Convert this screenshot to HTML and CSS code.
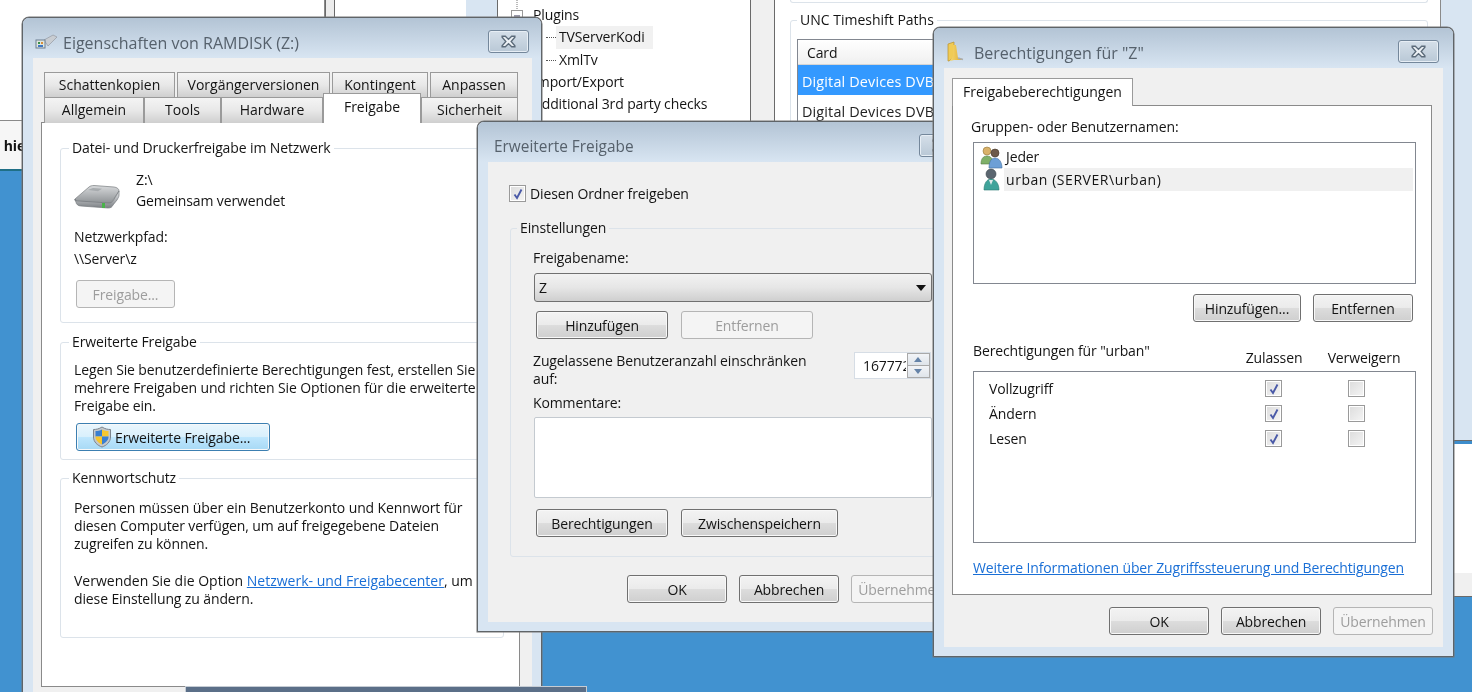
FILE: index.html
```html
<!DOCTYPE html>
<html lang="de">
<head>
<meta charset="utf-8">
<title>Freigabe</title>
<link rel="stylesheet" href="styles.css">
</head>
<body>
<svg class="defs" width="0" height="0" aria-hidden="true">
  <symbol id="ico-x" viewBox="0 0 16 12"><path d="M2 1h3l3 3 3-3h3v1l-3.500 4 3.500 4v1h-3l-3-3-3 3H2v-1l3.500-4L2 2z" fill="#eef2f6" stroke="#5c6b7a" stroke-width="1.300"/></symbol>
  <symbol id="ico-check" viewBox="0 0 12 12"><path d="M2.500 6.500 5 10 9.500 1.500" fill="none" stroke="#4a5aa8" stroke-width="1.900"/></symbol>
</svg>
<main class="desktop">
  <div class="bg bg-oldwin"></div>
  <div class="bg bg-strip"></div>
  <div class="bg bg-white2"></div>
  <div class="bg bg-frame"></div>
  <div class="bg bg-tree">
    <svg class="tree-lines" width="30" height="30" viewBox="0 0 30 30"><path d="M19 0v10" stroke="#777" stroke-dasharray="1 1"/><rect x="13.500" y="10.500" width="11" height="11" fill="#fff" stroke="#999"/><path d="M16 16h6" stroke="#335"/></svg>
    <p class="node">Plugins</p>
    <p class="node sub hover">TVServerKodi</p>
    <p class="node sub">XmlTv</p>
    <p class="node">Import/Export</p>
    <p class="node">Additional 3rd party checks</p>
  </div>
  <div class="bg bg-gap"></div>
  <div class="bg bg-right">
    <div class="old-group"></div>
    <fieldset class="unc">
      <legend>UNC Timeshift Paths</legend>
      <div class="table">
        <div class="th">Card</div>
        <div class="td sel">Digital Devices DVB-S2 Tuner</div>
        <div class="td">Digital Devices DVB-S2 Tuner</div>
      </div>
    </fieldset>
  </div>
  <div class="bg bg-rframe"></div>
  <div class="bg bg-rlow"><div class="rlow-band"></div><div class="rlow-white"></div><div class="rlow-gray"></div></div>
  <div class="bg bg-lowleft"><b>e hier</b></div>
  <div class="bg bg-taskbar"></div>

  <!-- Eigenschaften -->
  <section class="win win1">
    <header class="titlebar">
      <svg class="ti-drive" width="22" height="15" viewBox="0 0 22 15"><path d="M9 6 18 1l4 2-9 9z" fill="#c9cdd2" stroke="#8b9199" stroke-width=".6"/><rect x="1" y="6" width="9" height="8" fill="#dfe6de" stroke="#6d7f92"/><rect x="3" y="8" width="2" height="2" fill="#3a8f4a"/><rect x="6" y="8" width="2" height="2" fill="#d88f3a"/><rect x="3" y="11" width="5" height="2" fill="#3f77c4"/></svg>
      <h1 class="wtitle">Eigenschaften von RAMDISK (Z:)</h1>
      <span class="close"><svg width="17" height="13"><use href="#ico-x"/></svg></span>
    </header>
    <div class="client c1">
      <div class="tabrow row-top">
        <span class="tab">Schattenkopien</span><span class="tab">Vorgängerversionen</span><span class="tab">Kontingent</span><span class="tab">Anpassen</span>
      </div>
      <div class="tabrow row-bot">
        <span class="tab">Allgemein</span><span class="tab">Tools</span><span class="tab">Hardware</span><span class="tab active">Freigabe</span><span class="tab">Sicherheit</span>
      </div>
      <div class="panel p1">
        <fieldset class="grp g1">
          <legend>Datei- und Druckerfreigabe im Netzwerk</legend>
          <div class="drive-row">
            <svg class="drive" width="46" height="26" viewBox="0 0 46 26">
              <defs><linearGradient id="dt" x1="0" y1="0" x2="0" y2="1"><stop offset="0" stop-color="#d7d9db"/><stop offset="1" stop-color="#8f9396"/></linearGradient><linearGradient id="df" x1="0" y1="0" x2="0" y2="1"><stop offset="0" stop-color="#e8eaec"/><stop offset="1" stop-color="#7c8084"/></linearGradient></defs>
              <path d="M1 15 15 3c1-1 3-1.500 5-1.500l20 1.500c3 .3 5 2 5 4l-8 12-31-1c-3 0-6-1-5-3z" fill="url(#dt)" stroke="#85898c" stroke-width=".8"/>
              <path d="M1 15c0 1 1 2 4 2l30 2c2 0 3-1 4-2l6-10v4c0 2-1 3-2 5l-4 5c-1 2-2 3-5 3l-27-2c-3 0-5-2-5-4z" fill="url(#df)" stroke="#74787c" stroke-width=".7"/>
              <rect x="28" y="19" width="3" height="5" fill="#4ab34a"/>
              <path d="M14 6l5-2 9 .8-4 2.500z" fill="#a7abae"/>
            </svg>
            <div class="drive-text">Z:\<br>Gemeinsam verwendet</div>
          </div>
          <div class="np-label">Netzwerkpfad:</div>
          <div class="np-value">\\Server\z</div>
          <button class="btn off b-freigabe" type="button">Freigabe...</button>
        </fieldset>
        <fieldset class="grp g2">
          <legend>Erweiterte Freigabe</legend>
          <p class="txt">Legen Sie benutzerdefinierte Berechtigungen fest, erstellen Sie<br>mehrere Freigaben und richten Sie Optionen für die erweiterte<br>Freigabe ein.</p>
          <button class="btn hot b-erw" type="button">
            <svg width="20" height="22" viewBox="0 0 20 22"><path d="M10 1c3 2 6 2.500 8.500 2.500V11c0 5-4 8.500-8.500 10C5.500 19.500 1.500 16 1.500 11V3.500C4 3.500 7 3 10 1z" fill="#c4c8cc" stroke="#7d858d"/><path d="M10 3.500v7H3.500V5C6 5 8 4.500 10 3.500z" fill="#3a7fd0"/><path d="M10 3.500c2 1 4 1.500 6.500 1.500v5.500H10z" fill="#f6c62e"/><path d="M3.500 10.500H10v8c-3-1.300-6.500-4-6.500-7.500z" fill="#f6c62e"/><path d="M10 10.500h6.500V11c0 3.500-3.500 6.200-6.500 7.500z" fill="#3a7fd0"/></svg>
            <span>Erweiterte Freigabe...</span>
          </button>
        </fieldset>
        <fieldset class="grp g3">
          <legend>Kennwortschutz</legend>
          <p class="txt tall">Personen müssen über ein Benutzerkonto und Kennwort für<br>diesen Computer verfügen, um auf freigegebene Dateien<br>zugreifen zu können.<br><br><span class="wide">Verwenden Sie die Option <a href="#n">Netzwerk- und Freigabecenter</a>, um</span><br>diese Einstellung zu ändern.</p>
        </fieldset>
      </div>
    </div>
  </section>

  <!-- Erweiterte Freigabe -->
  <section class="win win2">
    <header class="titlebar">
      <h1 class="wtitle t2">Erweiterte Freigabe</h1>
      <span class="close"><svg width="17" height="13"><use href="#ico-x"/></svg></span>
    </header>
    <div class="client c2">
      <label class="cb-row"><span class="cb"><svg width="12" height="12"><use href="#ico-check"/></svg></span><span>Diesen Ordner freigeben</span></label>
      <fieldset class="grp g4">
        <legend>Einstellungen</legend>
        <div class="lbl">Freigabename:</div>
        <div class="combo"><span>Z</span><i class="arrow"></i></div>
        <div class="btnrow r-add">
          <button class="btn b132" type="button">Hinzufügen</button>
          <button class="btn off b132" type="button">Entfernen</button>
        </div>
        <div class="limit">
          <div class="limit-text">Zugelassene Benutzeranzahl einschränken<br>auf:</div>
          <div class="spin"><span class="spin-val">16777216</span><span class="spin-btns"><i class="up"></i><i class="dn"></i></span></div>
        </div>
        <div class="lbl k">Kommentare:</div>
        <div class="memo"></div>
        <div class="btnrow r-perm">
          <button class="btn b132" type="button">Berechtigungen</button>
          <button class="btn b157" type="button">Zwischenspeichern</button>
        </div>
      </fieldset>
      <div class="footer f2">
        <button class="btn b100" type="button">OK</button>
        <button class="btn b100" type="button">Abbrechen</button>
        <button class="btn off b100" type="button">Übernehmen</button>
      </div>
    </div>
  </section>

  <!-- Berechtigungen -->
  <section class="win win3">
    <header class="titlebar">
      <svg class="ti-folder" width="18" height="21" viewBox="0 0 18 21"><defs><linearGradient id="fo" x1="0" y1="0" x2="1" y2="0"><stop offset="0" stop-color="#f7d96e"/><stop offset="1" stop-color="#dca92f"/></linearGradient></defs><path d="M1 3l6-2v15l-5 4H1z" fill="#f0cb55" stroke="#b8912f" stroke-width=".7"/><path d="M6 4h3l2 13 5 1-2 1H7l-4 1 3-5z" fill="url(#fo)"/><path d="M11 17l5 1.500" stroke="#a9aeb4" stroke-width="1.500"/></svg>
      <h1 class="wtitle">Berechtigungen für "Z"</h1>
      <span class="close"><svg width="17" height="13"><use href="#ico-x"/></svg></span>
    </header>
    <div class="client c3">
      <span class="tab active single">Freigabeberechtigungen</span>
      <div class="panel p3">
        <div class="lbl g-names">Gruppen- oder Benutzernamen:</div>
        <ul class="users">
          <li>
            <svg width="24" height="24" viewBox="0 0 24 24"><circle cx="7" cy="6" r="4" fill="#d9b26a" stroke="#94773c" stroke-width=".6"/><path d="M1 19c0-5 2-8 6-8s6 3 6 8z" fill="#7fb069" stroke="#557a45" stroke-width=".6"/><circle cx="15" cy="8" r="4" fill="#6d5a4a" stroke="#443629" stroke-width=".6"/><path d="M9 23c0-6 2-10 6-10s7 4 7 10z" fill="#6d9fd6" stroke="#44719f" stroke-width=".6"/></svg>
            <span class="uname">Jeder</span>
          </li>
          <li class="selrow">
            <svg width="24" height="24" viewBox="0 0 24 24"><circle cx="11" cy="6" r="5" fill="#5b6670" stroke="#3d464e" stroke-width=".6"/><path d="M4 22c0-7 3-11 7-11s8 4 8 11z" fill="#3fa39a" stroke="#2a7a72" stroke-width=".6"/><path d="M9 12l2 5 2-5z" fill="#dfe8e8"/></svg>
            <span class="uname">urban (SERVER\urban)</span>
          </li>
        </ul>
        <div class="btnrow r-users">
          <button class="btn b108" type="button">Hinzufügen...</button>
          <button class="btn b100" type="button">Entfernen</button>
        </div>
        <div class="perm-head">
          <span class="ph-label">Berechtigungen für "urban"</span>
          <span class="ph-allow">Zulassen</span>
          <span class="ph-deny">Verweigern</span>
        </div>
        <div class="perm-list">
          <span>Vollzugriff</span><span class="cb"><svg width="12" height="12"><use href="#ico-check"/></svg></span><span class="cb"></span>
          <span>Ändern</span><span class="cb"><svg width="12" height="12"><use href="#ico-check"/></svg></span><span class="cb"></span>
          <span>Lesen</span><span class="cb"><svg width="12" height="12"><use href="#ico-check"/></svg></span><span class="cb"></span>
        </div>
        <a class="more" href="#m">Weitere Informationen über Zugriffssteuerung und Berechtigungen</a>
      </div>
      <div class="footer f3">
        <button class="btn b100" type="button">OK</button>
        <button class="btn b100" type="button">Abbrechen</button>
        <button class="btn off b100" type="button">Übernehmen</button>
      </div>
    </div>
  </section>
</main>
</body>
</html>
```
FILE: styles.css
```css
* { box-sizing: border-box; }
html, body { margin: 0; height: 100%; overflow: hidden; }
body {
  font-family: "Open Sans", "Noto Sans", sans-serif;
  font-size: 14px;
  letter-spacing: -0.12px;
  color: #141414;
}
.defs { position: absolute; }
.desktop {
  position: relative;
  width: 1472px;
  height: 692px;
  overflow: hidden;
  background: #4192d0;
  filter: blur(0.45px);
}
p { margin: 0; }
a { color: #1a6fd6; text-decoration: underline; }
h1 { margin: 0; font-weight: 400; font-size: inherit; }
fieldset { margin: 0; min-width: 0; }

/* background windows */
.bg { position: absolute; }
.bg-oldwin { left: -4px; top: -4px; width: 329px; height: 125px; background: #fff; border: 1px solid #8a8a8a; border-top: 0; }
.bg-strip { left: 325px; top: 0; width: 10px; height: 125px; background: #ececec; border-left: 1px solid #6a6a6a; border-right: 1px solid #6a6a6a; }
.bg-white2 { left: 335px; top: 0; width: 131px; height: 125px; background: #fff; }
.bg-frame { left: 466px; top: 0; width: 32px; height: 125px; background: #d8e5f2; border-right: 1px solid #6a6a6a; }
.bg-tree { left: 498px; top: 0; width: 252px; height: 125px; background: #fff; padding: 4px 0 0 35px; line-height: 22.300px; overflow: hidden; }
.tree-lines { position: absolute; left: 0; top: 0; }
.node { position: relative; height: 22.300px; white-space: nowrap; }
.node.sub { margin-left: 26px; }
.node.sub::before { content: ""; position: absolute; left: -13px; top: 11px; width: 10px; border-top: 1px dotted #555; }
.node.hover { background: #f1f1f1; width: 97px; margin-left: 23px; padding-left: 3px; }
.node.hover::before { left: -10px; }
.bg-gap { left: 750px; top: 0; width: 25px; height: 125px; background: #f0f0f0; border-left: 1px solid #6a6a6a; border-right: 1px solid #6a6a6a; }
.bg-right { left: 775px; top: 0; width: 666px; height: 125px; background: #fff; padding: 0 12px 0 15px; border-right: 1px solid #8a8a8a; overflow: hidden; }
.old-group { height: 3px; border: 1px solid #dce3ea; border-top: 0; border-radius: 0 0 3px 3px; }
.unc { margin-top: 7px; height: 200px; border: 1px solid #dce3ea; border-radius: 3px; padding: 9px 9px 0 6px; }
.unc legend { padding: 0 3px; margin-left: 0; line-height: 20px; letter-spacing: 0; }
.table { border: 1px solid #828790; border-bottom: 0; width: 100%; white-space: nowrap; }
.th { height: 25px; line-height: 25px; padding-left: 9px; background: linear-gradient(#fff, #f0f0f0); border-bottom: 1px solid #d5d5d5; }
.td { height: 30px; line-height: 34px; padding-left: 4px; color: #222; font-size: 14.400px; letter-spacing: 0.15px; }
.td.sel { background: #3399ff; color: #fff; }
.bg-rframe { left: 1441px; top: 0; width: 31px; height: 441px; background: #d8e5f2; }
.bg-rlow { left: 1441px; top: 440px; width: 31px; height: 160px; border-top: 1px solid #6a6a6a; display: flex; flex-direction: column; }
.rlow-band { height: 3px; background: #3d8dcc; }
.rlow-white { height: 129px; background: #fff; }
.rlow-gray { height: 23px; background: #f0f0f0; border-bottom: 1px solid #6a6a6a; box-sizing: content-box; }
.bg-lowleft { left: -8px; top: 120px; width: 40px; height: 51px; background: #f6f6f6; border-top: 1px solid #8a8a8a; border-bottom: 2px solid #1f6f86; padding-top: 15px; white-space: nowrap; overflow: hidden; line-height: 20px; }
.bg-taskbar { left: 185px; top: 686px; width: 402px; height: 10px; background: #5b6f88; border: 1px solid #c5ccd4; z-index: 2; }

/* windows */
.win { position: absolute; background: #d8e5f2; border: 1px solid #5f6468; box-shadow: 0 0 0 .5px #777; border-radius: 7px 7px 0 0; }
.win1 { left: 22px; top: 17px; width: 520px; height: 720px; }
.win2 { left: 477px; top: 121px; width: 498px; height: 511px; z-index: 3; }
.win3 { left: 933px; top: 27px; width: 521px; height: 630px; z-index: 4; }
.titlebar { height: 40px; display: flex; align-items: center; padding: 7px 14px 0 12px; background: linear-gradient(#b3c4d5, #d8e5f2); border-radius: 6px 6px 0 0; }
.wtitle { font-size: 16px; letter-spacing: 0; color: #56616c; white-space: nowrap; margin-top: 2px; }
.t2 { margin-left: 4px; font-size: 15.400px; }
.ti-drive { margin-right: 6px; }
.ti-folder { margin: 0 9px 0 1px; }
.close { margin-left: auto; width: 41px; height: 23px; display: flex; align-items: center; justify-content: center; border: 1px solid #74879b; border-radius: 3px; background: linear-gradient(#d5dfe9, #b9c8d6); box-shadow: inset 0 0 0 1px #e7eef5; }
.win1 .close { margin-right: -2px; }
.win3 .close { margin-right: 0; }

.client { background: #f0f0f0; }
.c1 { margin: 0 9px 0 10px; height: 680px; padding: 14px 11px 0 8px; }
.c2 { margin: 0 10px; height: 460px; padding: 23px 21px 0; }
.c3 { margin: 0 10px; height: 579px; padding: 10px 0 0 8px; }

/* tabs */
.tabrow { display: grid; }
.row-top { grid-template-columns: 131px 153px 96px 88px; column-gap: 2px; margin-left: 3px; height: 25px; }
.row-bot { grid-template-columns: 100px 77px 102px 98px 97px; margin-left: 3px; height: 25px; position: relative; }
.tab { display: block; text-align: center; line-height: 23px; border: 1px solid #9a9a9a; border-bottom: 0; background: linear-gradient(#f4f4f4 0, #e8e8e8 50%, #cfcfcf 100%); white-space: nowrap; letter-spacing: 0; }
.tab.active { background: #fff; margin-top: -4px; height: 30px; position: relative; z-index: 2; line-height: 25px; }
.tab.single { width: 181px; height: 28px; margin: 0; line-height: 25px; }
.panel { background: #fff; border: 1px solid #8a8a8a; }
.p1 { height: 565px; margin-right: 0; padding: 15px 15px 0 18px; width: 479px; }
.p3 { width: 480px; height: 490px; margin-top: -1px; padding: 12px 15px 0 20px; position: relative; }
.grp { border: 1px solid #dce3ea; border-radius: 3px; padding: 0 13px; }
.grp legend { padding: 0 3px; margin-left: -5px; line-height: 20px; white-space: nowrap; }
.g1 { height: 185px; padding-top: 11px; }
.g2 { height: 128px; margin-top: 9px; padding-top: 9px; }
.g3 { height: 170px; margin-top: 8px; padding-top: 11px; }
.drive-row { display: flex; }
.drive { margin-top: 15px; margin-right: 16px; flex: none; }
.drive-text { line-height: 21px; white-space: nowrap; }
.np-label { margin-top: 17px; line-height: 18px; }
.np-value { margin-top: 4px; line-height: 18px; }
.txt { line-height: 18px; white-space: nowrap; }
.txt.tall { line-height: 18.200px; }
.wide { letter-spacing: 0; }

/* buttons */
.btn { display: inline-flex; align-items: center; justify-content: center; height: 28px; padding: 0; font: inherit; letter-spacing: inherit; color: #141414; border: 1px solid #707070; border-radius: 3px; background: linear-gradient(#f3f3f3 0, #ebebeb 48%, #dcdcdc 52%, #cfcfcf 100%); box-shadow: inset 0 0 0 1px #f8f8f8; white-space: nowrap; }
.btn.off { color: #9d9d9d; border-color: #b5b5b5; background: #f4f4f4; box-shadow: none; }
.btn.hot { border-color: #3c7fb1; background: linear-gradient(#eaf6fd 0, #d9f0fc 48%, #bee6fd 52%, #a7d9f5 100%); }
.b-freigabe { display: flex; width: 99px; margin: 12px 0 0 2px; }
.b-erw { display: flex; width: 194px; margin: 8px 0 0 2px; justify-content: flex-start; padding-left: 15px; gap: 3px; }
.b132 { width: 132px; }
.b157 { width: 157px; }
.b100 { width: 100px; }
.b108 { width: 108px; }
.btnrow { display: flex; }

/* advanced sharing */
.cb-row { display: flex; align-items: center; gap: 4px; height: 17px; }
.cb { display: flex; align-items: center; justify-content: center; width: 17px; height: 17px; border: 1px solid #9a9a9a; background: linear-gradient(135deg, #dcdcdc, #f5f5f5); box-shadow: inset 0 0 0 1px #fff; }
.g4 { margin: 16px 0 0 1px; height: 339px; width: 432px; padding: 11px 0 0 23px; }
.g4 legend { margin-left: -17px; }
.lbl { line-height: 18px; white-space: nowrap; }
.g4 .lbl, .limit-text { margin-left: -1px; }
.combo { position: relative; margin-top: 6px; width: 398px; height: 29px; border: 1px solid #707070; border-radius: 3px; background: linear-gradient(#f2f2f2, #e6e6e6 50%, #cfcfcf); padding-left: 4px; line-height: 27px; }
.arrow { position: absolute; right: 5px; top: 11px; border: 5px solid transparent; border-top: 6px solid #111; border-bottom: 0; }
.r-add { margin: 9px 0 0 2px; gap: 13px; }
.limit { display: flex; justify-content: space-between; margin-top: 13px; width: 397px; line-height: 18px; white-space: nowrap; }
.spin { display: flex; width: 77px; height: 27px; background: #fff; border: 1px solid #d6dde5; }
.spin-val { flex: 1; min-width: 0; overflow: hidden; margin-right: 1px; padding: 2px 0 0 8px; line-height: 22px; }
.spin-btns { flex: none; width: 23px; display: flex; flex-direction: column; border: 1px solid #a9a9a9; }
.spin-btns i { flex: 1; position: relative; background: linear-gradient(#f2f4f7, #dfe4ea); }
.spin-btns i + i { border-top: 1px solid #a9a9a9; }
.up::after, .dn::after { content: ""; position: absolute; left: 6px; top: 3px; border: 4px solid transparent; }
.up::after { border-bottom: 5px solid #6583a8; border-top: 0; }
.dn::after { border-top: 5px solid #6583a8; border-bottom: 0; }
.k { margin-top: 6px; }
.memo { margin-top: 5px; width: 398px; height: 81px; background: #fff; border: 1px solid #c4cad0; border-radius: 2px; }
.r-perm { margin: 11px 0 0 2px; gap: 13px; }
.footer { display: flex; justify-content: flex-end; gap: 12px; }
.f2 { margin-top: 18px; width: 442px; }

/* permissions */
.g-names { margin-left: -2px; letter-spacing: -0.05px; }
.users { list-style: none; margin: 6px 0 0 0; padding: 2px 0 0; height: 142px; width: 443px; border: 1px solid #828790; }
.users li { display: flex; align-items: center; height: 23px; gap: 0; padding-left: 6px; }
.users svg { flex: none; }
.uname { padding-left: 2px; flex: 1; line-height: 21px; }
.selrow .uname { line-height: 23px; background: #f0f0f0; margin-right: 2px; letter-spacing: 0.55px; }
.r-users { justify-content: flex-end; gap: 12px; margin-top: 10px; width: 440px; }
.perm-head { display: flex; align-items: flex-end; margin-top: 20px; height: 29px; width: 439px; white-space: nowrap; }
.ph-label { flex: 1; align-self: flex-start; line-height: 18px; }
.ph-allow { width: 84px; text-align: center; line-height: 18px; margin-bottom: 4px; }
.ph-deny { width: 96px; text-align: center; line-height: 18px; margin-bottom: 4px; }
.perm-list { display: grid; grid-template-columns: 276px 83px 17px; grid-auto-rows: 25px; align-items: center; margin-top: 0; padding: 4px 0 0 15px; width: 443px; height: 172px; border: 1px solid #828790; }
.more { display: block; margin-top: 16px; line-height: 18px; white-space: nowrap; }
.f3 { margin-top: 12px; width: 481px; }
```
